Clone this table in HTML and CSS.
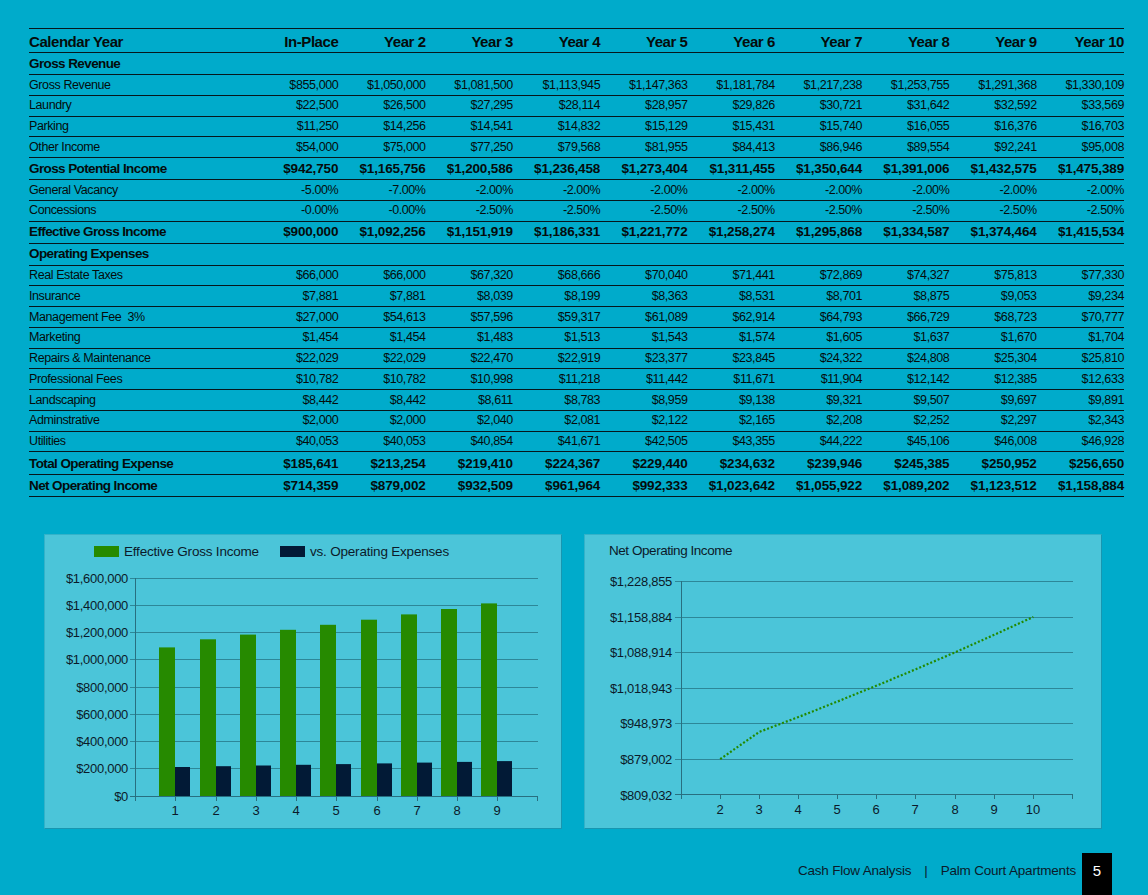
FILE: index.html
```html
<!DOCTYPE html>
<html>
<head>
<meta charset="utf-8">
<link rel="stylesheet" href="styles.css">
</head>
<body>
<div class="page">
  <div class="sheet">
    <div class="row head"><div class="lbl">Calendar Year</div><div>In-Place</div><div>Year 2</div><div>Year 3</div><div>Year 4</div><div>Year 5</div><div>Year 6</div><div>Year 7</div><div>Year 8</div><div>Year 9</div><div>Year 10</div></div>
    <div class="row section"><div class="lbl">Gross Revenue</div></div>
    <div class="row"><div class="lbl">Gross Revenue</div><div>$855,000</div><div>$1,050,000</div><div>$1,081,500</div><div>$1,113,945</div><div>$1,147,363</div><div>$1,181,784</div><div>$1,217,238</div><div>$1,253,755</div><div>$1,291,368</div><div>$1,330,109</div></div>
    <div class="row"><div class="lbl">Laundry</div><div>$22,500</div><div>$26,500</div><div>$27,295</div><div>$28,114</div><div>$28,957</div><div>$29,826</div><div>$30,721</div><div>$31,642</div><div>$32,592</div><div>$33,569</div></div>
    <div class="row"><div class="lbl">Parking</div><div>$11,250</div><div>$14,256</div><div>$14,541</div><div>$14,832</div><div>$15,129</div><div>$15,431</div><div>$15,740</div><div>$16,055</div><div>$16,376</div><div>$16,703</div></div>
    <div class="row"><div class="lbl">Other Income</div><div>$54,000</div><div>$75,000</div><div>$77,250</div><div>$79,568</div><div>$81,955</div><div>$84,413</div><div>$86,946</div><div>$89,554</div><div>$92,241</div><div>$95,008</div></div>
    <div class="row total"><div class="lbl">Gross Potential Income</div><div>$942,750</div><div>$1,165,756</div><div>$1,200,586</div><div>$1,236,458</div><div>$1,273,404</div><div>$1,311,455</div><div>$1,350,644</div><div>$1,391,006</div><div>$1,432,575</div><div>$1,475,389</div></div>
    <div class="row"><div class="lbl">General Vacancy</div><div>-5.00%</div><div>-7.00%</div><div>-2.00%</div><div>-2.00%</div><div>-2.00%</div><div>-2.00%</div><div>-2.00%</div><div>-2.00%</div><div>-2.00%</div><div>-2.00%</div></div>
    <div class="row"><div class="lbl">Concessions</div><div>-0.00%</div><div>-0.00%</div><div>-2.50%</div><div>-2.50%</div><div>-2.50%</div><div>-2.50%</div><div>-2.50%</div><div>-2.50%</div><div>-2.50%</div><div>-2.50%</div></div>
    <div class="row total"><div class="lbl">Effective Gross Income</div><div>$900,000</div><div>$1,092,256</div><div>$1,151,919</div><div>$1,186,331</div><div>$1,221,772</div><div>$1,258,274</div><div>$1,295,868</div><div>$1,334,587</div><div>$1,374,464</div><div>$1,415,534</div></div>
    <div class="row section"><div class="lbl">Operating Expenses</div></div>
    <div class="row"><div class="lbl">Real Estate Taxes</div><div>$66,000</div><div>$66,000</div><div>$67,320</div><div>$68,666</div><div>$70,040</div><div>$71,441</div><div>$72,869</div><div>$74,327</div><div>$75,813</div><div>$77,330</div></div>
    <div class="row"><div class="lbl">Insurance</div><div>$7,881</div><div>$7,881</div><div>$8,039</div><div>$8,199</div><div>$8,363</div><div>$8,531</div><div>$8,701</div><div>$8,875</div><div>$9,053</div><div>$9,234</div></div>
    <div class="row"><div class="lbl">Management Fee&nbsp; 3%</div><div>$27,000</div><div>$54,613</div><div>$57,596</div><div>$59,317</div><div>$61,089</div><div>$62,914</div><div>$64,793</div><div>$66,729</div><div>$68,723</div><div>$70,777</div></div>
    <div class="row"><div class="lbl">Marketing</div><div>$1,454</div><div>$1,454</div><div>$1,483</div><div>$1,513</div><div>$1,543</div><div>$1,574</div><div>$1,605</div><div>$1,637</div><div>$1,670</div><div>$1,704</div></div>
    <div class="row"><div class="lbl">Repairs &amp; Maintenance</div><div>$22,029</div><div>$22,029</div><div>$22,470</div><div>$22,919</div><div>$23,377</div><div>$23,845</div><div>$24,322</div><div>$24,808</div><div>$25,304</div><div>$25,810</div></div>
    <div class="row"><div class="lbl">Professional Fees</div><div>$10,782</div><div>$10,782</div><div>$10,998</div><div>$11,218</div><div>$11,442</div><div>$11,671</div><div>$11,904</div><div>$12,142</div><div>$12,385</div><div>$12,633</div></div>
    <div class="row"><div class="lbl">Landscaping</div><div>$8,442</div><div>$8,442</div><div>$8,611</div><div>$8,783</div><div>$8,959</div><div>$9,138</div><div>$9,321</div><div>$9,507</div><div>$9,697</div><div>$9,891</div></div>
    <div class="row"><div class="lbl">Adminstrative</div><div>$2,000</div><div>$2,000</div><div>$2,040</div><div>$2,081</div><div>$2,122</div><div>$2,165</div><div>$2,208</div><div>$2,252</div><div>$2,297</div><div>$2,343</div></div>
    <div class="row"><div class="lbl">Utilities</div><div>$40,053</div><div>$40,053</div><div>$40,854</div><div>$41,671</div><div>$42,505</div><div>$43,355</div><div>$44,222</div><div>$45,106</div><div>$46,008</div><div>$46,928</div></div>
    <div class="row total tall"><div class="lbl">Total Operating Expense</div><div>$185,641</div><div>$213,254</div><div>$219,410</div><div>$224,367</div><div>$229,440</div><div>$234,632</div><div>$239,946</div><div>$245,385</div><div>$250,952</div><div>$256,650</div></div>
    <div class="row total"><div class="lbl">Net Operating Income</div><div>$714,359</div><div>$879,002</div><div>$932,509</div><div>$961,964</div><div>$992,333</div><div>$1,023,642</div><div>$1,055,922</div><div>$1,089,202</div><div>$1,123,512</div><div>$1,158,884</div></div>
  </div>

  <div class="charts">
    <div class="panel">
      <svg class="chart" width="516" height="293" viewBox="0 0 516 293">
        <rect x="49" y="11" width="25" height="11" fill="#268a00"/>
        <text x="79" y="21" class="legend">Effective Gross Income</text>
        <rect x="235" y="11" width="25" height="11" fill="#021a36"/>
        <text x="265" y="21" class="legend">vs. Operating Expenses</text>
        <g class="grid">
          <line x1="85" y1="43.5" x2="493" y2="43.5"/>
          <line x1="85" y1="70.5" x2="493" y2="70.5"/>
          <line x1="85" y1="97.5" x2="493" y2="97.5"/>
          <line x1="85" y1="124.5" x2="493" y2="124.5"/>
          <line x1="85" y1="152.5" x2="493" y2="152.5"/>
          <line x1="85" y1="179.5" x2="493" y2="179.5"/>
          <line x1="85" y1="206.5" x2="493" y2="206.5"/>
          <line x1="85" y1="233.5" x2="493" y2="233.5"/>
        </g>
        <g class="ylab">
          <text x="83" y="48">$1,600,000</text>
          <text x="83" y="75">$1,400,000</text>
          <text x="83" y="102">$1,200,000</text>
          <text x="83" y="129">$1,000,000</text>
          <text x="83" y="157">$800,000</text>
          <text x="83" y="184">$600,000</text>
          <text x="83" y="211">$400,000</text>
          <text x="83" y="238">$200,000</text>
          <text x="83" y="266">$0</text>
        </g>
        <g fill="#268a00">
          <rect x="114" y="112.4" width="16" height="148.6"/>
          <rect x="155" y="104.3" width="16" height="156.7"/>
          <rect x="195" y="99.6" width="16" height="161.4"/>
          <rect x="235" y="94.8" width="16" height="166.2"/>
          <rect x="275" y="89.8" width="16" height="171.2"/>
          <rect x="316" y="84.7" width="16" height="176.3"/>
          <rect x="356" y="79.4" width="16" height="181.6"/>
          <rect x="396" y="74.0" width="16" height="187.0"/>
          <rect x="436" y="68.4" width="16" height="192.6"/>
        </g>
        <g fill="#021a36">
          <rect x="130" y="232.0" width="15" height="29.0"/>
          <rect x="171" y="231.2" width="15" height="29.8"/>
          <rect x="211" y="230.5" width="15" height="30.5"/>
          <rect x="251" y="229.8" width="15" height="31.2"/>
          <rect x="291" y="229.1" width="15" height="31.9"/>
          <rect x="332" y="228.4" width="15" height="32.6"/>
          <rect x="372" y="227.6" width="15" height="33.4"/>
          <rect x="412" y="226.9" width="15" height="34.1"/>
          <rect x="452" y="226.1" width="15" height="34.9"/>
        </g>
        <g class="axis">
          <line x1="90.5" y1="43" x2="90.5" y2="262"/>
          <line x1="85" y1="261.5" x2="493" y2="261.5"/>
          <line x1="90.5" y1="261" x2="90.5" y2="266"/>
          <line x1="130.5" y1="261" x2="130.5" y2="266"/>
          <line x1="171.5" y1="261" x2="171.5" y2="266"/>
          <line x1="211.5" y1="261" x2="211.5" y2="266"/>
          <line x1="251.5" y1="261" x2="251.5" y2="266"/>
          <line x1="291.5" y1="261" x2="291.5" y2="266"/>
          <line x1="332.5" y1="261" x2="332.5" y2="266"/>
          <line x1="372.5" y1="261" x2="372.5" y2="266"/>
          <line x1="412.5" y1="261" x2="412.5" y2="266"/>
          <line x1="452.5" y1="261" x2="452.5" y2="266"/>
          <line x1="492.5" y1="261" x2="492.5" y2="266"/>
        </g>
        <g class="xlab">
          <text x="130" y="280">1</text>
          <text x="171" y="280">2</text>
          <text x="211" y="280">3</text>
          <text x="251" y="280">4</text>
          <text x="291" y="280">5</text>
          <text x="332" y="280">6</text>
          <text x="372" y="280">7</text>
          <text x="412" y="280">8</text>
          <text x="452" y="280">9</text>
        </g>
      </svg>
    </div>
    <div class="panel">
      <svg class="chart" width="516" height="293" viewBox="0 0 516 293">
        <text x="24" y="20" class="legend title">Net Operating Income</text>
        <g class="grid">
          <line x1="90" y1="46.5" x2="488" y2="46.5"/>
          <line x1="90" y1="82.5" x2="488" y2="82.5"/>
          <line x1="90" y1="117.5" x2="488" y2="117.5"/>
          <line x1="90" y1="153.5" x2="488" y2="153.5"/>
          <line x1="90" y1="188.5" x2="488" y2="188.5"/>
          <line x1="90" y1="224.5" x2="488" y2="224.5"/>
        </g>
        <g class="ylab">
          <text x="87" y="51">$1,228,855</text>
          <text x="87" y="87">$1,158,884</text>
          <text x="87" y="122">$1,088,914</text>
          <text x="87" y="158">$1,018,943</text>
          <text x="87" y="193">$948,973</text>
          <text x="87" y="229">$879,002</text>
          <text x="87" y="264.5">$809,032</text>
        </g>
        <g class="axis">
          <line x1="96.5" y1="46" x2="96.5" y2="260"/>
          <line x1="90" y1="259.5" x2="488" y2="259.5"/>
          <line x1="96.5" y1="259" x2="96.5" y2="264"/>
          <line x1="135.5" y1="259" x2="135.5" y2="264"/>
          <line x1="174.5" y1="259" x2="174.5" y2="264"/>
          <line x1="213.5" y1="259" x2="213.5" y2="264"/>
          <line x1="252.5" y1="259" x2="252.5" y2="264"/>
          <line x1="291.5" y1="259" x2="291.5" y2="264"/>
          <line x1="330.5" y1="259" x2="330.5" y2="264"/>
          <line x1="370.5" y1="259" x2="370.5" y2="264"/>
          <line x1="409.5" y1="259" x2="409.5" y2="264"/>
          <line x1="448.5" y1="259" x2="448.5" y2="264"/>
          <line x1="487.5" y1="259" x2="487.5" y2="264"/>
        </g>
        <polyline class="noi" points="135.2,224.1 174.3,196.9 213.5,182 252.6,166.5 291.8,150.6 330.9,134.2 370.1,117.3 409.2,99.8 448.4,81.9"/>
        <g class="xlab">
          <text x="135" y="278.5">2</text>
          <text x="174" y="278.5">3</text>
          <text x="213" y="278.5">4</text>
          <text x="252" y="278.5">5</text>
          <text x="291" y="278.5">6</text>
          <text x="330" y="278.5">7</text>
          <text x="370" y="278.5">8</text>
          <text x="409" y="278.5">9</text>
          <text x="448" y="278.5">10</text>
        </g>
      </svg>
    </div>
  </div>

  <div class="footer">
    <span class="foot-text">Cash Flow Analysis</span>
    <span class="foot-text pipe">|</span>
    <span class="foot-text">Palm Court Apartments</span>
    <span class="pagenum">5</span>
  </div>
</div>
</body>
</html>
```

FILE: styles.css
```css
html, body {
  margin: 0;
  padding: 0;
}
body {
  background: #00abcb;
  font-family: "Liberation Sans", Arial, sans-serif;
  color: #050c0c;
}
.page {
  width: 1148px;
  height: 895px;
  overflow: hidden;
  padding: 28px 0 0 29px;
  box-sizing: border-box;
}
.sheet {
  width: 1095px;
  border-top: 1px solid #06171c;
}
.row {
  display: grid;
  grid-template-columns: 222px repeat(10, 1fr);
  height: 20.75px;
  box-sizing: border-box;
  border-bottom: 1px solid #06171c;
  align-items: center;
  font-size: 12.5px;
  letter-spacing: -0.4px;
  white-space: nowrap;
}
.row > div {
  text-align: right;
  line-height: 1;
}
.row > .lbl {
  text-align: left;
}
.row.head {
  height: 24px;
  font-size: 15px;
  font-weight: bold;
  letter-spacing: -0.45px;
  padding-top: 2px;
}
.row.section {
  height: 22px;
  font-size: 13.5px;
  font-weight: bold;
  letter-spacing: -0.6px;
}
.row.total {
  height: 22px;
  font-size: 13.5px;
  font-weight: bold;
  letter-spacing: -0.15px;
}
.row.total > .lbl {
  letter-spacing: -0.6px;
}
.row.tall {
  height: 23px;
}
.charts {
  display: flex;
  gap: 22px;
  margin-top: 37px;
  padding-left: 15px;
}
.panel {
  width: 518px;
  height: 295px;
  box-sizing: border-box;
  background: #4bc5d9;
  border: 1px solid #33b2c9;
  border-right-color: #1996b0;
  border-bottom-color: #1996b0;
}
.chart {
  display: block;
  font-family: "Liberation Sans", Arial, sans-serif;
}
.legend {
  font-size: 13.5px;
  fill: #0b1a2a;
  letter-spacing: -0.2px;
}
.legend.title {
  letter-spacing: -0.45px;
}
.ylab text {
  font-size: 13px;
  fill: #0b1a2a;
  text-anchor: end;
  letter-spacing: -0.3px;
}
.xlab text {
  font-size: 13px;
  fill: #0b1a2a;
  text-anchor: middle;
}
.grid line {
  stroke: #2d8798;
  stroke-width: 1;
}
.axis line {
  stroke: #286f80;
  stroke-width: 1;
}
.noi {
  fill: none;
  stroke: #238a00;
  stroke-width: 2.2;
  stroke-dasharray: 2 2;
}
.footer {
  display: flex;
  justify-content: flex-end;
  align-items: flex-start;
  margin-top: 24px;
  padding-right: 36px;
  gap: 0;
}
.foot-text {
  font-size: 13.5px;
  color: #0b1a2a;
  line-height: 36px;
  letter-spacing: -0.2px;
}
.foot-text.pipe {
  padding: 0 13px;
}
.pagenum {
  width: 30px;
  height: 43px;
  margin-left: 6px;
  background: #000;
  color: #fff;
  font-size: 15px;
  line-height: 36px;
  text-align: center;
}
```
